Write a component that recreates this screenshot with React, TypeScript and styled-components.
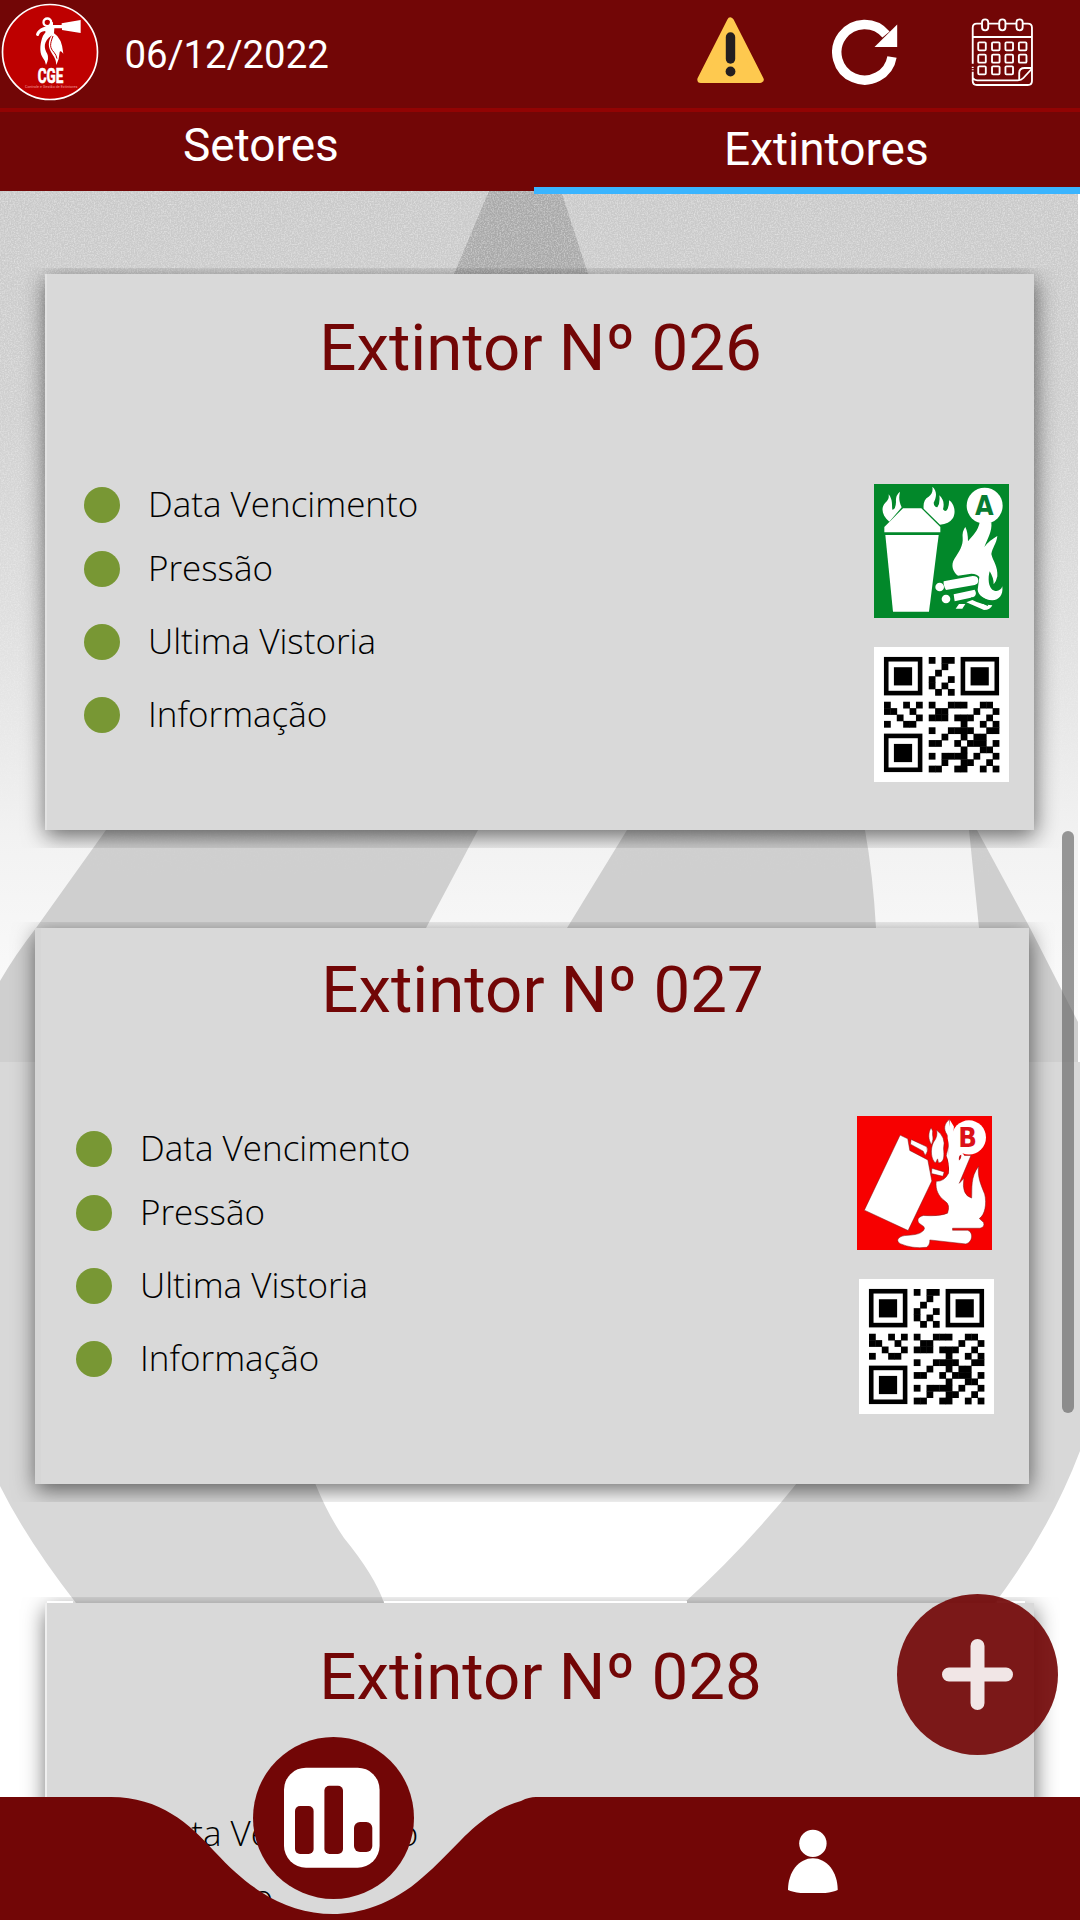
import React from "react";
import styled, { createGlobalStyle } from "styled-components";

const wine = "#720606";

const GlobalStyle = createGlobalStyle`
  * { box-sizing: border-box; }
  body { margin: 0; background: #fff; }
`;

const Screen = styled.div`
  position: relative;
  display: flex;
  flex-direction: column;
  width: 1080px;
  height: 1920px;
  overflow: hidden;
  background: #fff;
  font-family: Roboto, sans-serif;
`;

const Header = styled.header`
  display: flex;
  align-items: flex-start;
  height: 112px;
  background: ${wine};
  border-bottom: 4px solid #920303;
`;

const LogoBox = styled.div`
  width: 110px;
  height: 108px;
`;

const DateLabel = styled.time`
  flex: 1;
  padding: 30px 0 0 14.5px;
  font-size: 38.4px;
  line-height: 50px;
  color: #fff;
`;

const Actions = styled.div`
  display: grid;
  grid-template-columns: 135px 139px 62.7px;
  align-items: start;
  padding: 16px 46px 0 0;
`;

const Tabs = styled.nav`
  position: relative;
  z-index: 2;
  display: flex;
  height: 79px;
  background: ${wine};
`;

const Tab = styled.div<{ $active?: boolean; $size: number; $top: number; $indent: number }>`
  width: ${(p) => (p.$active ? 546 : 534)}px;
  height: ${(p) => (p.$active ? 82 : 79)}px;
  padding: ${(p) => p.$top}px 0 0 ${(p) => p.$indent}px;
  border-bottom: ${(p) => (p.$active ? "7px solid #3ab4fe" : "none")};
  font-size: ${(p) => p.$size}px;
  line-height: 50px;
  color: #fff;
`;

const Content = styled.main`
  position: relative;
  flex: 1;
  overflow: hidden;
  padding-top: 83px;
`;

const Backdrop = styled.svg`
  position: absolute;
  left: 0;
  top: 0;
`;

const Card = styled.section<{ $left: number; $width: number; $gap: number; $edge: string; $edgeWidth: number }>`
  position: relative;
  width: ${(p) => p.$width}px;
  height: 556px;
  margin: 0 0 ${(p) => p.$gap}px ${(p) => p.$left}px;
  background: #d9d9d9;
  border-left: ${(p) => p.$edgeWidth}px solid ${(p) => p.$edge};
  box-shadow: 1px 6px 21px rgba(0, 0, 0, 0.58);
  clip-path: inset(-6px -26px -18px -26px);
`;

const TopHighlight = styled.div`
  position: absolute;
  left: 0;
  top: -2px;
  width: 978px;
  height: 2px;
  background: linear-gradient(90deg, #fff 26px, transparent 26px 337px, #fff 337px 640px, transparent 640px 950px, #fff 950px);
`;

const Title = styled.h2<{ $top: number; $shift: number }>`
  margin: 0;
  padding: ${(p) => p.$top}px 0 0 ${(p) => p.$shift}px;
  font-size: 65.4px;
  font-weight: 400;
  line-height: 80px;
  text-align: center;
  color: ${wine};
`;

const Body = styled.div<{ $left: number; $right: number }>`
  display: flex;
  justify-content: space-between;
  padding: 0 ${(p) => p.$right}px 0 ${(p) => p.$left}px;
`;

const Checks = styled.ul<{ $top: number }>`
  display: grid;
  grid-template-rows: 64px 72.6px 73px 40px;
  align-items: start;
  margin: ${(p) => p.$top}px 0 0;
  padding: 0;
  list-style: none;
`;

const Check = styled.li`
  display: flex;
  align-items: center;
  gap: 28px;
  height: 40px;
`;

const Dot = styled.span`
  width: 36px;
  height: 36px;
  border-radius: 50%;
  background: #789734;
`;

const CheckLabel = styled.span`
  padding-bottom: 2px;
  font-family: "Open Sans", sans-serif;
  font-size: 35px;
  font-weight: 300;
  line-height: 40px;
  color: #000;
`;

const Media = styled.div<{ $top: number }>`
  display: flex;
  flex-direction: column;
  gap: 28.5px;
  padding-top: ${(p) => p.$top}px;
`;

const Badge = styled.div<{ $outdent: number }>`
  height: 134px;
  margin-left: -${(p) => p.$outdent}px;
`;

const ScrollThumb = styled.div`
  position: absolute;
  left: 1061.5px;
  top: 831px;
  width: 12.5px;
  height: 582px;
  border-radius: 6px;
  background: rgba(100, 100, 100, 0.66);
`;

const AddButton = styled.button`
  position: absolute;
  left: 897px;
  top: 1594px;
  width: 161px;
  height: 161px;
  padding: 0;
  border: 0;
  border-radius: 50%;
  background: ${wine};
  opacity: 0.91;
`;

const BottomBar = styled.footer`
  position: absolute;
  left: 0;
  bottom: 0;
  width: 1080px;
  height: 123px;
`;

const BarShape = styled.svg`
  position: absolute;
  inset: 0;
`;

const BarItems = styled.div`
  position: relative;
  display: grid;
  grid-template-columns: 546px 534px;
  justify-items: center;
`;

const StatsButton = styled.button`
  position: relative;
  top: -60px;
  left: 60px;
  width: 161px;
  height: 162px;
  padding: 0;
  border: 0;
  border-radius: 50%;
  background: ${wine};
`;

const UserButton = styled.button`
  width: 50px;
  height: 64px;
  margin-top: 32px;
  padding: 0;
  border: 0;
  background: none;
`;

const Logo = () => (
  <svg width="110" height="108" viewBox="0 0 330 324">
    <circle cx="150" cy="156" r="142.5" fill="#be0000" stroke="#fff" strokeWidth="5" />
    <circle cx="142" cy="67" r="11.5" fill="none" stroke="#fff" strokeWidth="7" />
    <path fill="#fff" d="M150 65L159 67L159 75L185 75L185 70L242 60L242 99L186 90L186 85L163 85L162 100Q186 114 190 161Q181 150 179 156Q178 177 169 195Q168 177 158 164C142 142 144 122 156 106C128 124 132 146 142 162Q148 175 138 195Q136 182 127 171C117 154 121 126 129 107L137 96L135 93Q120 94 116 107Q109 110 108 103Q112 89 130 82L148 78Z" />
    <path fill="#fff" d="M160 110C152 132 154 143 165 152Q171 159 171 166C178 144 170 127 160 110Z" />
    <path d="M159 108C149 134 149 143 162 157Q169 165 171 176" fill="none" stroke="#be0000" strokeWidth="3" />
    <text x="113" y="249" textLength="77" lengthAdjust="spacingAndGlyphs" fill="#fff" stroke="#fff" strokeWidth="2" fontFamily="Roboto, sans-serif" fontWeight="700" fontSize="59">CGE</text>
    <text x="75" y="263" textLength="157" lengthAdjust="spacingAndGlyphs" fill="#e99" fontFamily="Roboto, sans-serif" fontSize="11">Controle e Gestão de Extintores</text>
  </svg>
);

const WarningIcon = () => (
  <svg width="67" height="68" viewBox="0 0 67 68">
    <path d="M33.5 5L63.2 63.5H3.8Z" fill="#fec94f" stroke="#fec94f" strokeWidth="7" strokeLinejoin="round" />
    <path d="M33.5 21V43" stroke="#231f20" strokeWidth="9.4" strokeLinecap="round" />
    <circle cx="33.5" cy="55.5" r="4.9" fill="#231f20" />
  </svg>
);

const RefreshIcon = () => (
  <svg width="66" height="70" viewBox="0 -4 66 70">
    <path d="M54 14.5A27.8 27.8 0 1 0 60 37" fill="none" stroke="#fff" strokeWidth="9.4" />
    <path d="M65.2 4.5V27H42.5Z" fill="#fff" />
  </svg>
);

const dayCells = [
  [1284, 140], [1324, 140], [1363, 140], [1402, 140],
  [1284, 177], [1324, 177], [1363, 177], [1402, 177],
  [1284, 212], [1324, 212], [1363, 212],
];

const CalendarIcon = () => (
  <svg width="62.7" height="71" viewBox="1252 49 182 213" preserveAspectRatio="none" fill="none" stroke="#fff" strokeWidth="5.4">
    <path d="M1257 192V84Q1257 72 1269 72H1283M1303 72H1333M1353 72H1383M1403 72H1417Q1429 72 1429 84V244Q1429 256 1417 256H1269Q1257 256 1257 244V216M1257 201V205M1257 209V212M1257 112H1429M1258 236Q1262 242 1270 242H1388Q1398 242 1404 235L1428 208M1392 240V220Q1392 205 1408 205H1428" />
    {[1293, 1343, 1393].map((x) => (
      <rect key={x} x={x - 9} y="59" width="18" height="33" rx="9" />
    ))}
    {dayCells.map(([x, y]) => (
      <rect key={`${x}-${y}`} x={x - 11} y={y - 12} width="22" height="24" rx="3" />
    ))}
  </svg>
);

const ClassAIcon = () => (
  <svg width="135" height="134" viewBox="42 42 405 402" preserveAspectRatio="none">
    <rect x="42" y="42" width="405" height="402" fill="#02882a" />
    <g fill="#fff">
      <path d="M76 195H236L207 425H99Z" />
      <path d="M129 115H184L241 171V187H73V171Z" />
      <path d="M88 155C65 137 62 112 76 98C86 88 87 84 86 73C99 90 95 105 97 119Q107 119 108 96Q106 76 120 65C116 83 117 94 125 112Z" />
      <path d="M240 164L191 116C189 99 194 86 206 80C217 71 219 62 217 50C233 64 229 82 221 98Q222 111 232 112Q241 99 238 76C249 87 254 98 249 118Q257 129 263 116Q268 104 267 91C282 99 289 126 279 144Q267 162 240 164Z" />
      <path d="M360 153L394 157C397 185 382 207 373 231C385 215 395 209 412 198C410 220 397 233 394 252C399 274 414 288 412 319Q409 335 401 343Q401 323 389 304C383 326 386 351 397 359C411 368 423 361 427 349C430 376 417 390 397 391C375 390 354 376 353 359L358 321Q352 312 334 311L294 317C278 306 272 285 283 267C298 244 310 226 308 203Q306 184 316 171Q324 187 324 214C337 197 354 185 360 153Z" />
      <circle cx="374" cy="107" r="54" />
      <circle cx="239" cy="351" r="13" /><circle cx="258" cy="387" r="13" />
      <path d="M251 334L338 318Q355 318 355 331Q355 342 344 345L258 360Q249 346 251 334Z" />
      <path d="M281 373L344 359Q354 375 339 382L284 394Z" />
      <path d="M297 402H316L307 416H287ZM319 397L337 390Q366 405 397 406Q391 420 372 420Z" />
    </g>
    <path d="M334 383L384 406M352 377L395 398" stroke="#02882a" strokeWidth="4" />
    <text x="373" y="135" textAnchor="middle" fontFamily="DejaVu Sans, sans-serif" fontWeight="700" fontSize="80" textLength="56" lengthAdjust="spacingAndGlyphs" fill="#087c32">A</text>
  </svg>
);

const ClassBIcon = () => (
  <svg width="135" height="134" viewBox="39 48 404 400" preserveAspectRatio="none">
    <rect x="39" y="48" width="404" height="400" fill="#f70000" />
    <g fill="#fff" stroke="#7d1717" strokeWidth="1.5">
      <path d="M168 105L191 116L197 151L251 179L263 242L192 390L61 329Z" />
      <path d="M201 118L248 140Q254 153 243 166L237 153L199 132Z" />
      <path d="M261 83C251 98 252 118 262 134Q269 116 265 104Q268 93 261 83Z" />
      <path d="M277 90Q282 109 268 126C257 148 261 178 274 188L280 176L283 188C301 187 300 166 298 145Q306 111 277 90Z" />
      <path d="M263 204L300 215L296 228L262 220Z" />
      <path d="M316 58C300 70 297 87 308 103C320 127 309 149 306 167Q318 193 313 219Q300 244 276 243C273 268 283 288 302 302Q319 312 310 338Q286 348 238 345C218 349 216 365 232 373Q251 383 230 396Q220 403 181 405C160 409 155 421 168 429Q205 445 247 440Q258 432 257 418L365 430C386 424 388 395 370 389H325V383H407Q422 380 418 366L405 354C422 344 428 309 421 281C409 251 399 230 403 198C378 231 384 264 382 293Q351 284 359 234L345 249L380 166H315Z" />
    </g>
    <circle cx="374" cy="112" r="51" fill="#fff" />
    <path d="M317 60L329 79L326 120L360 166L344 246L316 225L312 170Q318 144 310 114Z" fill="#fff" />
    <path d="M351 164Q342 166 344 181Q352 176 351 164Z" fill="#c51117" />
    <text x="370" y="140" textAnchor="middle" fontFamily="DejaVu Sans, sans-serif" fontWeight="700" fontSize="78" textLength="56" lengthAdjust="spacingAndGlyphs" fill="#dc1119">B</text>
  </svg>
);

const qrRows: Record<number, number[]> = {
  0: [7, 9, 10], 1: [9], 2: [8], 3: [7, 10], 4: [7, 9], 5: [8, 10],
  7: [0, 3, 5, 7, 10, 11, 12, 15, 16],
  8: [0, 1, 4, 8, 9, 14, 17],
  9: [2, 5, 7, 8, 9, 11, 12, 13, 16],
  10: [0, 3, 4, 12, 15, 17],
  11: [7, 10, 11, 12, 13, 16, 17],
  12: [9, 12, 14, 15],
  13: [7, 8, 11, 13, 14, 15, 17],
  14: [12, 15, 16],
  15: [7, 9, 10, 11, 12, 14, 17],
  16: [9, 12, 13, 16],
  17: [7, 8, 11, 12, 15, 17],
};

const QrCode = () => (
  <svg width="135" height="135" viewBox="0 0 135 135">
    <rect width="135" height="135" fill="#fff" />
    <g transform="translate(10 10) scale(6.39)">
      {[[0, 0], [12, 0], [0, 12]].map(([x, y]) => (
        <g key={`${x}-${y}`}>
          <rect x={x + 0.35} y={y + 0.35} width="5.3" height="5.3" fill="none" stroke="#000" strokeWidth="0.72" />
          <rect x={x + 1.55} y={y + 1.6} width="2.85" height="2.85" />
        </g>
      ))}
      {Object.entries(qrRows).map(([row, cols]) =>
        cols.map((c) => <rect key={`${row}-${c}`} x={c} y={Number(row)} width="1.06" height="1.06" />)
      )}
    </g>
  </svg>
);

const Background = () => (
  <Backdrop width="1080" height="1729" viewBox="0 191 1080 1729">
    <defs>
      <linearGradient id="sky" gradientUnits="userSpaceOnUse" x1="0" y1="191" x2="0" y2="1062">
        <stop offset="0" stopColor="#c9c9c9" />
        <stop offset="0.25" stopColor="#cfcfcf" />
        <stop offset="0.5" stopColor="#dfdfdf" />
        <stop offset="0.74" stopColor="#f2f2f2" />
        <stop offset="1" stopColor="#fdfdfd" />
      </linearGradient>
      <linearGradient id="fade" gradientUnits="userSpaceOnUse" x1="0" y1="191" x2="0" y2="900">
        <stop offset="0" stopColor="#ddd" />
        <stop offset="0.6" stopColor="#999" />
        <stop offset="1" stopColor="#000" />
      </linearGradient>
      <mask id="grainMask" maskUnits="userSpaceOnUse" x="0" y="191" width="1078" height="871">
        <rect y="191" width="1078" height="871" fill="url(#fade)" />
      </mask>
      <filter id="grain" x="0" y="0" width="100%" height="100%">
        <feTurbulence type="fractalNoise" baseFrequency="0.7" numOctaves="2" seed="4" />
        <feColorMatrix values="0 0 0 0 1  0 0 0 0 1  0 0 0 0 1  1.1 0 0 0 -0.42" />
      </filter>
    </defs>
    <rect y="191" width="1078" height="871" fill="url(#sky)" />
    <path fill="#a9a9a9" d="M489 191H561L588 274H454Z" />
    <path fill="#cfcfcf" d="M106 830H478L426 928V1062H0V981Q15 955 36 928Z" />
    <path fill="#cfcfcf" d="M627 830H865Q873 875 876 928H567ZM969 830H977L1030 928L1078 1022V1062H1000L979 928Z" />
    <rect y="191" width="1078" height="871" filter="url(#grain)" mask="url(#grainMask)" />
    <path fill="#d8d8d8" d="M0 1062H400V1483H315Q328 1515 344 1538Q375 1576 384 1603H76Q27 1540 0 1486Z" />
    <path fill="#d8d8d8" d="M900 1062H1080V1451Q1050 1530 995 1603H684Q743 1550 797 1483Z" />
  </Backdrop>
);

const checks = ["Data Vencimento", "Pressão", "Ultima Vistoria", "Informação"];

interface Extinguisher {
  number: string;
  kind: "A" | "B";
  left: number;
  width: number;
  gap: number;
  edge: string;
  edgeWidth: number;
  titleTop: number;
  titleShift: number;
  checksTop: number;
  checksLeft: number;
  mediaTop: number;
  badgeOutdent: number;
  right: number;
  highlight?: boolean;
}

const extinguishers: Extinguisher[] = [
  { number: "026", kind: "A", left: 45, width: 989, gap: 98, edge: "#e2e2e2", edgeWidth: 2, titleTop: 34, titleShift: 0, checksTop: 97, checksLeft: 37, mediaTop: 96, badgeOutdent: 0, right: 25 },
  { number: "027", kind: "B", left: 35, width: 994, gap: 119, edge: "#d6d6d6", edgeWidth: 6, titleTop: 22, titleShift: 15, checksTop: 99, checksLeft: 35, mediaTop: 86, badgeOutdent: 1.5, right: 35.5 },
  { number: "028", kind: "A", left: 45, width: 989, gap: 0, edge: "#efefef", edgeWidth: 2, titleTop: 34, titleShift: 0, checksTop: 97, checksLeft: 37, mediaTop: 96, badgeOutdent: 0, right: 25, highlight: true },
];

export default function App() {
  return (
    <>
      <GlobalStyle />
      <Screen>
        <Header>
          <LogoBox><Logo /></LogoBox>
          <DateLabel>06/12/2022</DateLabel>
          <Actions>
            <WarningIcon />
            <RefreshIcon />
            <CalendarIcon />
          </Actions>
        </Header>
        <Tabs>
          <Tab $size={46} $top={8} $indent={183}>Setores</Tab>
          <Tab $active $size={46} $top={12} $indent={190}>Extintores</Tab>
        </Tabs>
        <Content>
          <Background />
          {extinguishers.map((e) => (
            <Card key={e.number} $left={e.left} $width={e.width} $gap={e.gap} $edge={e.edge} $edgeWidth={e.edgeWidth}>
              {e.highlight && <TopHighlight />}
              <Title $top={e.titleTop} $shift={e.titleShift}>Extintor Nº {e.number}</Title>
              <Body $left={e.checksLeft} $right={e.right}>
                <Checks $top={e.checksTop}>
                  {checks.map((label) => (
                    <Check key={label}>
                      <Dot />
                      <CheckLabel>{label}</CheckLabel>
                    </Check>
                  ))}
                </Checks>
                <Media $top={e.mediaTop}>
                  <Badge $outdent={e.badgeOutdent}>
                    {e.kind === "A" ? <ClassAIcon /> : <ClassBIcon />}
                  </Badge>
                  <QrCode />
                </Media>
              </Body>
            </Card>
          ))}
        </Content>
        <ScrollThumb />
        <AddButton aria-label="Adicionar">
          <svg width="161" height="161" viewBox="0 0 161 161">
            <path d="M80.5 52V109M52 80.5H109" stroke="#f4e8e8" strokeWidth="14" strokeLinecap="round" />
          </svg>
        </AddButton>
        <BottomBar>
          <BarShape width="1080" height="123" viewBox="0 1797 1080 123">
            <path fill={wine} d="M0 1797H111C160 1797 190 1824 214 1851C232 1870 243 1880 261 1892C282 1906 307 1914 333 1914C358 1914 392 1905 423 1877C436 1866 448 1853 461 1840C489 1812 505 1806 521 1801C527 1798 531 1797 536 1797H1080V1920H0Z" />
          </BarShape>
          <BarItems>
            <StatsButton aria-label="Estatísticas">
              <svg width="161" height="162" viewBox="253 1737 161 162">
                <rect x="284" y="1767.7" width="95.6" height="100" rx="22" fill="#fff" />
                <g fill={wine}>
                  <rect x="295" y="1806" width="18.6" height="48" rx="5" />
                  <rect x="324.4" y="1785.7" width="18.6" height="68.3" rx="5" />
                  <rect x="354" y="1822" width="18.3" height="30" rx="6" />
                </g>
              </svg>
            </StatsButton>
            <UserButton aria-label="Perfil">
              <svg width="50" height="64" viewBox="788 1829 50 64">
                <circle cx="812.9" cy="1843.4" r="13.7" fill="#fff" />
                <path d="M788 1890C788 1872 799 1858.3 812.9 1858.3S837.7 1872 837.7 1890Q830 1893.6 812.9 1893.6T788 1890Z" fill="#fff" />
              </svg>
            </UserButton>
          </BarItems>
        </BottomBar>
      </Screen>
    </>
  );
}
